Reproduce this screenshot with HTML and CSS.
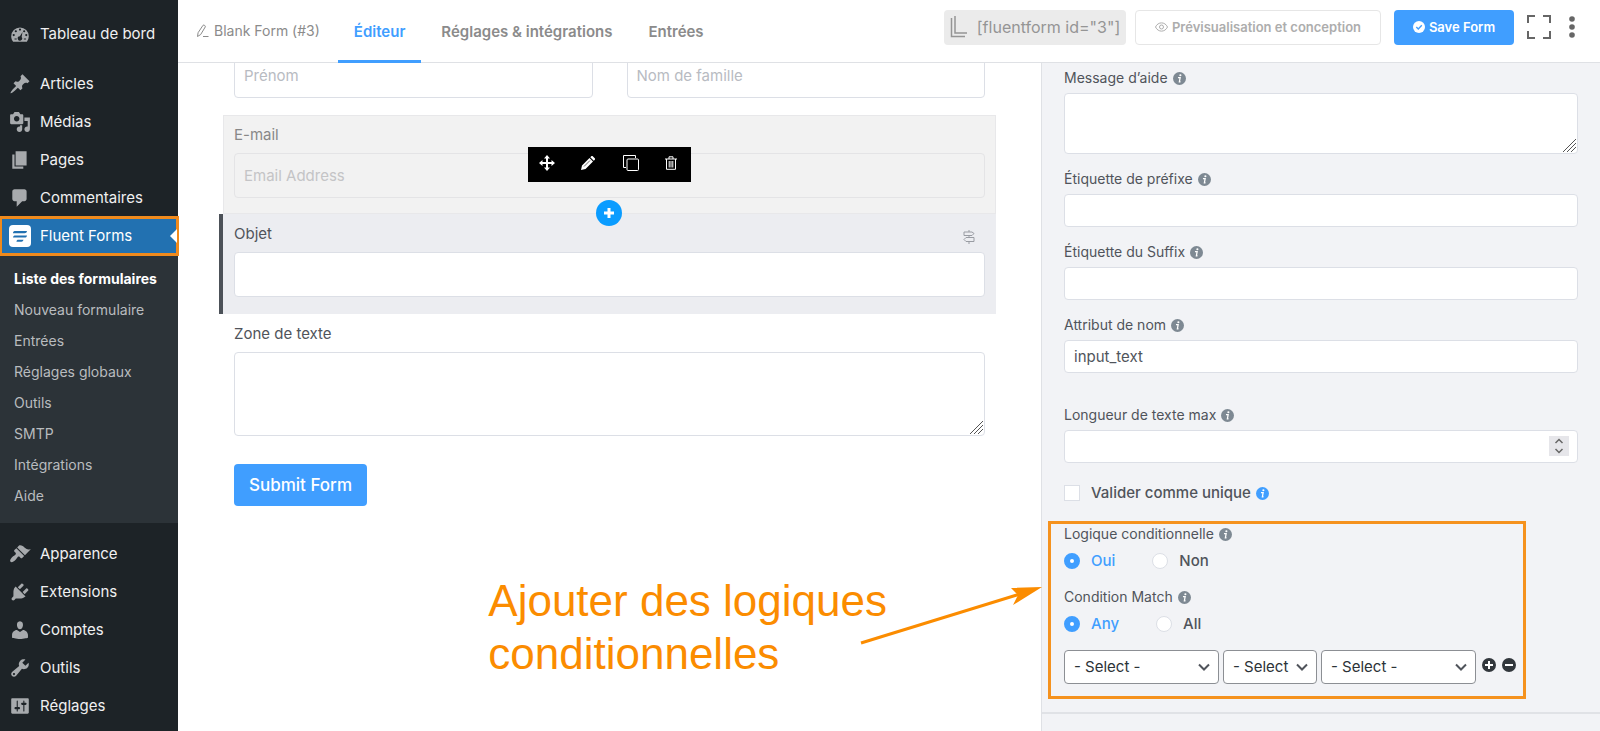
FILE: index.html
```html
<!DOCTYPE html>
<html lang="fr">

<head>
    <meta charset="UTF-8" />
    <meta name="viewport" content="width=device-width, initial-scale=1.0" />
    <title>Blank Form (#3) · Fluent Forms</title>
    <link rel="stylesheet" href="styles.css">
</head>

<body>
    <svg width="0" height="0" class="sprite" aria-hidden="true">
        <symbol id="info" viewBox="0 0 12 12">
            <circle cx="6" cy="6" r="6" fill="currentColor" />
            <circle cx="6.8" cy="3" r="1" fill="#fff" />
            <path d="M4.6 5.2h2L5.9 9h1" fill="none" stroke="#fff" stroke-width="1.2" />
        </symbol>
        <symbol id="chevron" viewBox="0 0 12 8">
            <path d="M1 1.5l5 5 5-5" fill="none" stroke="currentColor" stroke-width="2" />
        </symbol>
        <symbol id="grip" viewBox="0 0 14 14">
            <path d="M1 14L14 1M5 14l9-9M9 14l5-5" fill="none" stroke="#555" stroke-width="1" />
        </symbol>
    </svg>

    <nav class="sidebar">
        <ul class="menu">
            <li><a href="#"><svg viewBox="0 0 20 20"><path fill-rule="evenodd" d="M3.76 17h12.48A8 8 0 0 0 18 12a8 8 0 0 0-16 0c0 1.91.67 3.65 1.76 5zM10 5a1 1 0 1 1 0 2 1 1 0 0 1 0-2zM6.2 6.5a1 1 0 1 1 0 2 1 1 0 0 1 0-2zM13.8 6.500a1 1 0 1 1 0 2 1 1 0 0 1 0-2zM4.300 10a1 1 0 1 1 0 2 1 1 0 0 1 0-2zM15.700 10a1 1 0 1 1 0 2 1 1 0 0 1 0-2zM12.300 8.200l-.8 4.600a2 2 0 1 1-1.600-.8zM5 14h2v1H5zM13.500 14h2v1h-2z" /></svg>Tableau de bord</a></li>
        </ul>
        <ul class="menu">
            <li><a href="#"><svg viewBox="0 0 20 20"><path d="M10.440 3.020l1.820-1.820 6.360 6.350-1.830 1.820c-1.050-.68-2.480-.57-3.410.36l-.75.75c-.92.93-1.040 2.350-.35 3.410l-1.830 1.820-2.410-2.410-2.800 2.790c-.42.42-3.380 2.710-3.800 2.290s1.860-3.390 2.280-3.810l2.790-2.790L4.100 9.360l1.830-1.820c1.050.69 2.480.57 3.400-.36l.75-.75c.93-.92 1.050-2.350.36-3.410z" /></svg>Articles</a></li>
            <li><a href="#"><svg viewBox="0 0 20 20"><path d="M13 11V4c0-.55-.45-1-1-1h-1.670L9 1H5L3.670 3H2c-.55 0-1 .45-1 1v7c0 .55.45 1 1 1h10c.55 0 1-.45 1-1zM7 4.500c1.380 0 2.500 1.120 2.500 2.500S8.380 9.500 7 9.500 4.500 8.380 4.500 7 5.620 4.500 7 4.500zM14 6h5v10.500c0 1.380-1.120 2.500-2.500 2.500S14 17.880 14 16.500s1.120-2.500 2.500-2.500c.17 0 .34.02.5.05V9h-3V6zm-4 8.050V13h2v3.500c0 1.380-1.120 2.500-2.500 2.500S7 17.880 7 16.500 8.120 14 9.500 14c.17 0 .34.02.5.05z" /></svg>Médias</a></li>
            <li><a href="#"><svg viewBox="0 0 20 20"><path d="M6 15V2h10v13H6zm-1 1h8v2H3V5h2v11z" /></svg>Pages</a></li>
            <li><a href="#"><svg viewBox="0 0 20 20"><path d="M5 2h9c1.100 0 2 .9 2 2v7c0 1.100-.9 2-2 2h-2l-5 5v-5H5c-1.100 0-2-.9-2-2V4c0-1.100.9-2 2-2z" /></svg>Commentaires</a></li>
            <li class="current">
                <a href="#"><svg viewBox="0 0 22 22"><rect width="22" height="22" rx="4" fill="#fff" /><path d="M4 8C4 6.500 5 6 6.500 6H18c-.3 1.500-1 2.200-2.500 2.200H4zM4 12.500C4 11 5 10.400 6.500 10.400H18c-.3 1.500-1 2.200-2.500 2.200H4zM7.500 16.500c0-1.200.8-1.700 1.800-1.700h5.200c-.3 1.300-1 1.900-2 1.900h-5z" fill="#2271b1" /></svg>Fluent Forms</a>
                <ul class="submenu">
                    <li><a href="#" class="active">Liste des formulaires</a></li>
                    <li><a href="#">Nouveau formulaire</a></li>
                    <li><a href="#">Entrées</a></li>
                    <li><a href="#">Réglages globaux</a></li>
                    <li><a href="#">Outils</a></li>
                    <li><a href="#">SMTP</a></li>
                    <li><a href="#">Intégrations</a></li>
                    <li><a href="#">Aide</a></li>
                </ul>
            </li>
        </ul>
        <ul class="menu">
            <li><a href="#"><svg viewBox="0 0 20 20"><path d="M14.480 11.060L7.410 3.990l1.500-1.500c.5-.56 2.300-.47 3.510.32 1.210.8 1.430 1.280 2.910 2.100 1.180.64 2.450 1.260 4.450.85zm-.71.71L6.700 4.700 4.930 6.470c-.39.39-.39 1.020 0 1.410l1.060 1.060c.39.39.39 1.030 0 1.420-.6.6-1.430 1.110-2.210 1.690-.35.26-.7.53-1.010.84C1.430 14.230.4 16.080 1.400 17.070c.99 1 2.840-.03 4.180-1.360.31-.31.58-.66.85-1.020.57-.78 1.080-1.610 1.690-2.210.39-.39 1.020-.39 1.410 0l1.060 1.060c.39.39 1.020.39 1.410 0z" /></svg>Apparence</a></li>
            <li><a href="#"><svg viewBox="0 0 20 20"><path d="M13.110 4.360L9.870 7.600 8 5.730l3.240-3.240c.35-.34 1.050-.2 1.560.32.52.51.66 1.210.31 1.550zm-8 1.770l.91-1.120 9.010 9.010-1.190.84c-.71.71-2.630 1.160-3.820 1.160H6.140L4.900 17.260c-.59.59-1.540.59-2.120 0-.59-.58-.59-1.530 0-2.120l1.240-1.240v-3.880c0-1.130.4-3.190 1.090-3.890zm7.260 3.970l3.240-3.240c.34-.35 1.040-.21 1.550.31.52.51.66 1.210.31 1.550l-3.240 3.250z" /></svg>Extensions</a></li>
            <li><a href="#"><svg viewBox="0 0 20 20"><path d="M10 9.250c-2.270 0-2.730-3.440-2.730-3.440C7 4.020 7.820 2 9.970 2c2.160 0 2.980 2.020 2.710 3.810 0 0-.41 3.440-2.680 3.440zm0 2.570L12.720 10c2.390 0 4.520 2.330 4.520 4.530v2.490s-3.650 1.130-7.240 1.130c-3.650 0-7.240-1.130-7.240-1.130v-2.490c0-2.250 1.940-4.480 4.470-4.480z" /></svg>Comptes</a></li>
            <li><a href="#"><svg viewBox="0 0 20 20"><path fill-rule="evenodd" d="M16.680 9.770c-1.340 1.340-3.300 1.670-4.950.99l-5.410 6.520c-.99.99-2.590.99-3.580 0s-.99-2.590 0-3.570l6.520-5.420c-.68-1.650-.35-3.610.99-4.950 1.280-1.280 3.120-1.620 4.720-1.060l-2.890 2.890 2.820 2.820 2.860-2.870c.53 1.580.18 3.390-1.080 4.650zM3.810 16.210c.4.39 1.040.39 1.430 0 .4-.4.4-1.040 0-1.430-.39-.4-1.030-.4-1.430 0-.39.39-.39 1.030 0 1.430z" /></svg>Outils</a></li>
            <li><a href="#"><svg viewBox="0 0 20 20"><path fill-rule="evenodd" d="M18 16V4c0-.55-.45-1-1-1H3c-.55 0-1 .45-1 1v12c0 .55.45 1 1 1h14c.55 0 1-.45 1-1zM8 11h1c.55 0 1 .45 1 1s-.45 1-1 1H8v1.500c0 .28-.22.5-.5.5s-.5-.22-.5-.5V13H6c-.55 0-1-.45-1-1s.45-1 1-1h1V5.500c0-.28.22-.5.5-.5s.5.22.5.5V11zm5-2h-1c-.55 0-1-.45-1-1s.45-1 1-1h1V5.500c0-.28.22-.5.5-.5s.5.22.5.5V7h1c.55 0 1 .45 1 1s-.45 1-1 1h-1v5.500c0 .28-.22.5-.5.5s-.5-.22-.5-.5V9z" /></svg>Réglages</a></li>
        </ul>
    </nav>

    <main class="main">
        <header class="topbar">
            <a href="#" class="form-name"><svg width="13" height="14" viewBox="0 0 13 14"><path d="M1.500 12.500l.6-3.800L7 1.300c.8-.8 2.800.5 2.300 1.600L4.700 10.500zM7 12.500h5.500" fill="none" stroke="currentColor" /></svg>Blank Form (#3)</a>
            <nav class="tabs">
                <a href="#" class="active">Éditeur</a>
                <a href="#">Réglages &amp; intégrations</a>
                <a href="#">Entrées</a>
            </nav>
            <div class="actions">
                <button class="shortcode"><svg width="18" height="22" viewBox="0 0 18 22"><path d="M1.500 2v18.500H15M5 0v17h12" fill="none" stroke="currentColor" stroke-width="1.500" /></svg>[fluentform id="3"]</button>
                <button class="preview"><svg width="13" height="10" viewBox="0 0 13 10"><path d="M.5 5C3-.5 10-.5 12.500 5 10 10.500 3 10.500.5 5z" fill="none" stroke="currentColor" /><circle cx="6.500" cy="5" r="2" fill="none" stroke="currentColor" /></svg>Prévisualisation et conception</button>
                <button class="save"><svg width="12" height="12" viewBox="0 0 12 12"><circle cx="6" cy="6" r="6" fill="#fff" /><path d="M3.300 6l2 2 3.500-3.700" fill="none" stroke="#409eff" stroke-width="1.400" /></svg>Save Form</button>
                <button class="fullscreen" aria-label="Plein écran"><svg width="24" height="24" viewBox="0 0 24 24"><path d="M1 8V1h7M16 1h7v7M23 16v7h-7M8 23H1v-7" fill="none" stroke="currentColor" stroke-width="2" /></svg></button>
                <button class="more" aria-label="Plus"><svg width="6" height="22" viewBox="0 0 6 22"><circle cx="3" cy="3" r="2.800" fill="currentColor" /><circle cx="3" cy="11" r="2.800" fill="currentColor" /><circle cx="3" cy="19" r="2.800" fill="currentColor" /></svg></button>
            </div>
        </header>

        <div class="editor">
            <section class="canvas">
                <div class="names">
                    <input type="text" placeholder="Prénom" aria-label="Prénom">
                    <input type="text" placeholder="Nom de famille" aria-label="Nom de famille">
                </div>

                <div class="item hovered">
                    <label for="email">E-mail</label>
                    <input type="email" id="email" placeholder="Email Address">
                    <div class="item-tools">
                        <button aria-label="Déplacer"><svg width="16" height="16" viewBox="0 0 16 16"><path d="M8 2v12M2 8h12" stroke="#fff" stroke-width="2" /><path d="M8 0l3 3.500H5zM8 16l3-3.500H5zM0 8l3.500-3v6zM16 8l-3.500-3v6z" fill="#fff" /></svg></button>
                        <button aria-label="Modifier"><svg width="14" height="14" viewBox="0 0 14 14"><path d="M0 14l1-4.500L8.500 2 12 5.500 4.500 13zM9.300 1.200L10.500 0h1L14 2.500v1l-1.200 1.200z" fill="#fff" /><path d="M3 10.500L9 4.500" stroke="#000" stroke-width=".6" /></svg></button>
                        <button aria-label="Dupliquer"><svg width="16" height="16" viewBox="0 0 16 16"><rect x="4" y="4" width="11.500" height="11.500" rx="1" fill="none" stroke="#fff" /><path d="M3 12.500H.5V.5h12V3" fill="none" stroke="#fff" /></svg></button>
                        <button aria-label="Supprimer"><svg width="12" height="14" viewBox="0 0 12 14"><path d="M0 3h12M4 3V.8h4V3M1.500 3v10.300h9V3M4.200 5v6.500M6 5v6.500M7.800 5v6.500" fill="none" stroke="#fff" /></svg></button>
                    </div>
                    <button class="add" aria-label="Ajouter"><svg width="12" height="12" viewBox="0 0 12 12"><path d="M6 1v10M1 6h10" stroke="#fff" stroke-width="3" /></svg></button>
                </div>

                <div class="item selected">
                    <label for="objet">Objet</label>
                    <svg class="logic" width="12" height="14" viewBox="0 0 12 14"><path d="M6 0v2M1 2h8l2 1.500L9 5.500H1zM6 5.500v2M11 7.500H3L1 9.500l2 2h8zM6 11.500V14" fill="none" stroke="#999ca3" /></svg>
                    <input type="text" id="objet">
                </div>

                <div class="item">
                    <label for="zone">Zone de texte</label>
                    <div class="area">
                        <textarea id="zone"></textarea>
                        <svg class="grip" width="14" height="14"><use href="#grip" /></svg>
                    </div>
                </div>

                <button class="submit">Submit Form</button>

                <p class="note">Ajouter des logiques<br>conditionnelles</p>
                <svg class="arrow" width="184" height="62" viewBox="0 0 184 62"><path d="M1 60L160 11" stroke="#fb8c00" stroke-width="3" /><path d="M182 4l-31 1 7 7-5 10z" fill="#fb8c00" /></svg>
            </section>

            <aside class="settings">
                <div class="field">
                    <label for="help">Message d’aide <svg><use href="#info" /></svg></label>
                    <div class="area">
                        <textarea id="help"></textarea>
                        <svg class="grip" width="14" height="14"><use href="#grip" /></svg>
                    </div>
                </div>
                <div class="field">
                    <label for="prefix">Étiquette de préfixe <svg><use href="#info" /></svg></label>
                    <input type="text" id="prefix">
                </div>
                <div class="field">
                    <label for="suffix">Étiquette du Suffix <svg><use href="#info" /></svg></label>
                    <input type="text" id="suffix">
                </div>
                <div class="field spaced">
                    <label for="name">Attribut de nom <svg><use href="#info" /></svg></label>
                    <input type="text" id="name" value="input_text">
                </div>
                <div class="field">
                    <label for="max">Longueur de texte max <svg><use href="#info" /></svg></label>
                    <div class="number">
                        <input type="number" id="max">
                        <svg class="spinner" width="20" height="20" viewBox="0 0 20 20"><rect width="20" height="20" fill="#e6e6ea" /><path d="M6.500 7L10 3.500 13.500 7M6.500 13l3.500 3.500 3.500-3.500" fill="none" stroke="#666" stroke-width="1.500" /></svg>
                    </div>
                </div>
                <label class="choice unique"><input type="checkbox">Valider comme unique <svg><use href="#info" /></svg></label>

                <div class="conditions">
                    <div class="label">Logique conditionnelle <svg><use href="#info" /></svg></div>
                    <div class="choices">
                        <label class="choice"><input type="radio" name="logic" checked><span>Oui</span></label>
                        <label class="choice"><input type="radio" name="logic"><span>Non</span></label>
                    </div>
                    <div class="label">Condition Match <svg><use href="#info" /></svg></div>
                    <div class="choices">
                        <label class="choice"><input type="radio" name="match" checked><span>Any</span></label>
                        <label class="choice"><input type="radio" name="match"><span>All</span></label>
                    </div>
                    <div class="rule">
                        <div class="select wide"><select aria-label="Champ"><option>- Select -</option></select><svg><use href="#chevron" /></svg></div>
                        <div class="select"><select aria-label="Opérateur"><option>- Select</option></select><svg><use href="#chevron" /></svg></div>
                        <div class="select wide"><select aria-label="Valeur"><option>- Select -</option></select><svg><use href="#chevron" /></svg></div>
                        <button aria-label="Ajouter une règle"><svg width="14" height="14" viewBox="0 0 14 14"><circle cx="7" cy="7" r="7" fill="#32373c" /><path d="M7 3v8M3 7h8" stroke="#fff" stroke-width="2" /></svg></button>
                        <button aria-label="Retirer la règle"><svg width="14" height="14" viewBox="0 0 14 14"><circle cx="7" cy="7" r="7" fill="#32373c" /><path d="M3 7h8" stroke="#fff" stroke-width="2" /></svg></button>
                    </div>
                </div>
            </aside>
        </div>
    </main>
</body>

</html>
```
FILE: styles.css
```css
* {
    box-sizing: border-box;
}

body {
    margin: 0;
    height: 100vh;
    display: flex;
    overflow: hidden;
    font-family: Inter, "Liberation Sans", sans-serif;
    font-size: 15px;
    line-height: 20px;
    color: #50545b;
    background: #fff;
}

a {
    color: inherit;
    text-decoration: none;
}

ul {
    list-style: none;
    margin: 0;
    padding: 0;
}

button {
    font: inherit;
    border: 0;
    padding: 0;
    background: none;
    cursor: pointer;
    display: flex;
    align-items: center;
    justify-content: center;
}

.sprite {
    position: absolute;
}

/* sidebar */
.sidebar {
    flex: none;
    width: 178px;
    padding-top: 15px;
    background: #1d2327;
    color: #f0f0f1;
}

.menu {
    margin-bottom: 12px;
}

.menu > li > a {
    display: flex;
    align-items: center;
    gap: 9px;
    height: 38px;
    padding-left: 9px;
}

.menu svg {
    width: 22px;
    height: 22px;
    fill: #a7aaad;
}

.menu > .current > a {
    position: relative;
    background: #2271b1;
    color: #fff;
    outline: 3px solid #f08a1c;
    outline-offset: -2px;
}

.current > a::after {
    content: "";
    position: absolute;
    right: 1px;
    top: 12px;
    border: 7px solid transparent;
    border-left: 0;
    border-right-color: #fff;
}

.submenu {
    padding: 8px 0 12px;
    background: #2c3338;
    color: #b9bcbf;
    font-size: 14px;
}

.submenu a {
    display: block;
    padding: 0 14px;
    line-height: 31px;
    white-space: nowrap;
}

.submenu .active {
    color: #fff;
    font-weight: 700;
}

/* top bar */
.main {
    flex: 1;
    min-width: 0;
    display: flex;
    flex-direction: column;
}

.topbar {
    position: relative;
    z-index: 2;
    flex: none;
    display: flex;
    height: 63px;
    background: #fff;
    border-bottom: 1px solid #dfe1e5;
    color: #8b8b8b;
    white-space: nowrap;
}

.form-name {
    display: flex;
    align-items: center;
    gap: 5px;
    margin: 0 18px;
    font-size: 14px;
}

.tabs {
    display: flex;
    gap: 4px;
    font-weight: 600;
}

.tabs a {
    padding: 0 16px;
    line-height: 63px;
}

.tabs .active {
    height: 63px;
    color: #409eff;
    border-bottom: 3px solid #409eff;
}

.actions {
    display: flex;
    align-items: center;
    gap: 13px;
    margin: 0 25px 8px auto;
}

.actions button {
    height: 35px;
    border-radius: 4px;
    color: #666;
}

.actions .shortcode {
    width: 182px;
    gap: 9px;
    margin-right: -4px;
    background: #ebebeb;
    color: #959595;
    font-size: 16px;
}

.actions .preview {
    width: 246px;
    gap: 4px;
    border: 1px solid #e6e6e6;
    color: #adadad;
    font-size: 13px;
    font-weight: 600;
}

.actions .save {
    width: 120px;
    gap: 4px;
    background: #409eff;
    color: #fff;
    font-size: 13px;
    font-weight: 600;
}

.actions .more {
    margin-left: 5px;
}

/* form preview */
.editor {
    flex: 1;
    min-height: 0;
    display: flex;
}

.canvas {
    position: relative;
    flex: 1;
    min-width: 0;
    padding: 0 45px;
}

.canvas input,
.canvas textarea {
    display: block;
    width: 100%;
    height: 45px;
    padding: 0 9px;
    border: 1px solid #dcdfe6;
    border-radius: 4px;
    background: #fff;
    font: inherit;
}

::placeholder {
    color: #b8bbc2;
    opacity: 1;
}

.names {
    display: flex;
    gap: 34px;
    margin: -10px 11px 17px;
}

.item {
    position: relative;
    padding: 9px 10px 15px;
    border: 1px solid transparent;
}

.item label {
    display: block;
    margin-bottom: 8px;
}

.item.hovered {
    background: #f2f2f2;
    border-color: #e8e8ea;
    color: #888;
}

.item.hovered input {
    background: transparent;
    border-color: #e4e4e6;
}

.item.hovered ::placeholder {
    color: #c4c4c6;
}

.item.selected {
    padding-bottom: 16px;
    background: #ecedf1;
    box-shadow: -4px 0 #4c5158;
}

.area {
    position: relative;
}

.canvas textarea {
    height: 84px;
    resize: none;
}

.grip {
    position: absolute;
    right: 2px;
    bottom: 2px;
}

.item-tools {
    position: absolute;
    top: 31px;
    left: 50%;
    display: grid;
    grid-template-columns: 38px 45px 41px 39px;
    width: 163px;
    height: 35px;
    padding-bottom: 4px;
    margin-left: -82px;
    background: #000;
}

.add {
    position: absolute;
    z-index: 1;
    left: 50%;
    bottom: -13px;
    width: 26px;
    height: 26px;
    margin-left: -14px;
    border-radius: 50%;
    background: #0a9cff;
}

.logic {
    position: absolute;
    top: 15px;
    right: 20px;
}

.submit {
    width: 133px;
    height: 42px;
    margin: 12px 11px;
    border-radius: 4px;
    background: #409eff;
    color: #fff;
    font-size: 17px;
    font-weight: 500;
}

.note {
    position: absolute;
    right: 154px;
    bottom: 51px;
    margin: 0;
    color: #fb8c00;
    font: 44px/53px "Liberation Sans", Arial, sans-serif;
}

.arrow {
    position: absolute;
    right: -3px;
    bottom: 86px;
}

/* field settings */
.settings {
    flex: none;
    display: flex;
    flex-direction: column;
    width: 559px;
    padding: 5px 22px 0;
    background: #f2f3f6;
    border-left: 1px solid #dfe1e5;
}

.settings::after {
    content: "";
    margin: 13px -22px 0;
    border-top: 2px solid #e0e2e6;
}

.field {
    margin-bottom: 15px;
}

.field.spaced {
    margin-bottom: 32px;
}

.field label,
.label {
    display: flex;
    align-items: center;
    gap: 5px;
    margin-bottom: 5px;
    font-size: 14px;
}

.field label svg,
.label svg,
.unique svg {
    width: 13px;
    height: 13px;
    color: #7e8993;
}

.field input,
.field textarea {
    display: block;
    width: 100%;
    height: 33px;
    padding: 0 9px;
    border: 1px solid #dcdfe6;
    border-radius: 4px;
    background: #fff;
    color: inherit;
    font: inherit;
}

.field textarea {
    height: 61px;
    resize: none;
}

.number {
    position: relative;
}

.number input {
    appearance: textfield;
}

.spinner {
    position: absolute;
    right: 9px;
    top: 6px;
}

.choice {
    display: flex;
    align-items: center;
    font-weight: 500;
}

.choice input {
    appearance: none;
    width: 16px;
    height: 16px;
    margin: 0 11px 0 0;
    border: 1px solid #dcdfe6;
    background: #fff;
}

.choice input[type="radio"] {
    border-radius: 50%;
}

.choice input:checked {
    border: 6px solid #409eff;
}

.choice input:checked + span {
    color: #409eff;
}

.unique {
    margin: 5px 0 18px;
}

.unique svg {
    margin-left: 5px;
    color: #409eff;
}

.conditions {
    width: 478px;
    margin-left: -16px;
    padding: 0 3px 12px 13px;
    border: 3px solid #f5921e;
}

.conditions .label {
    margin-bottom: 7px;
}

.choices {
    display: flex;
    gap: 37px;
    margin-bottom: 16px;
}

.rule {
    display: flex;
    gap: 4px;
    align-items: center;
}

.select {
    position: relative;
    flex: none;
    width: 94px;
}

.select.wide {
    width: 155px;
}

.select select {
    appearance: none;
    display: block;
    width: 100%;
    height: 34px;
    padding: 0 9px;
    border: 1px solid #8c8f94;
    border-radius: 4px;
    background: #fff;
    color: #2c3338;
    font: inherit;
}

.select svg {
    position: absolute;
    right: 9px;
    top: 13px;
    width: 12px;
    height: 8px;
    pointer-events: none;
}

.rule button {
    margin: 0 0 4px 2px;
}
```
